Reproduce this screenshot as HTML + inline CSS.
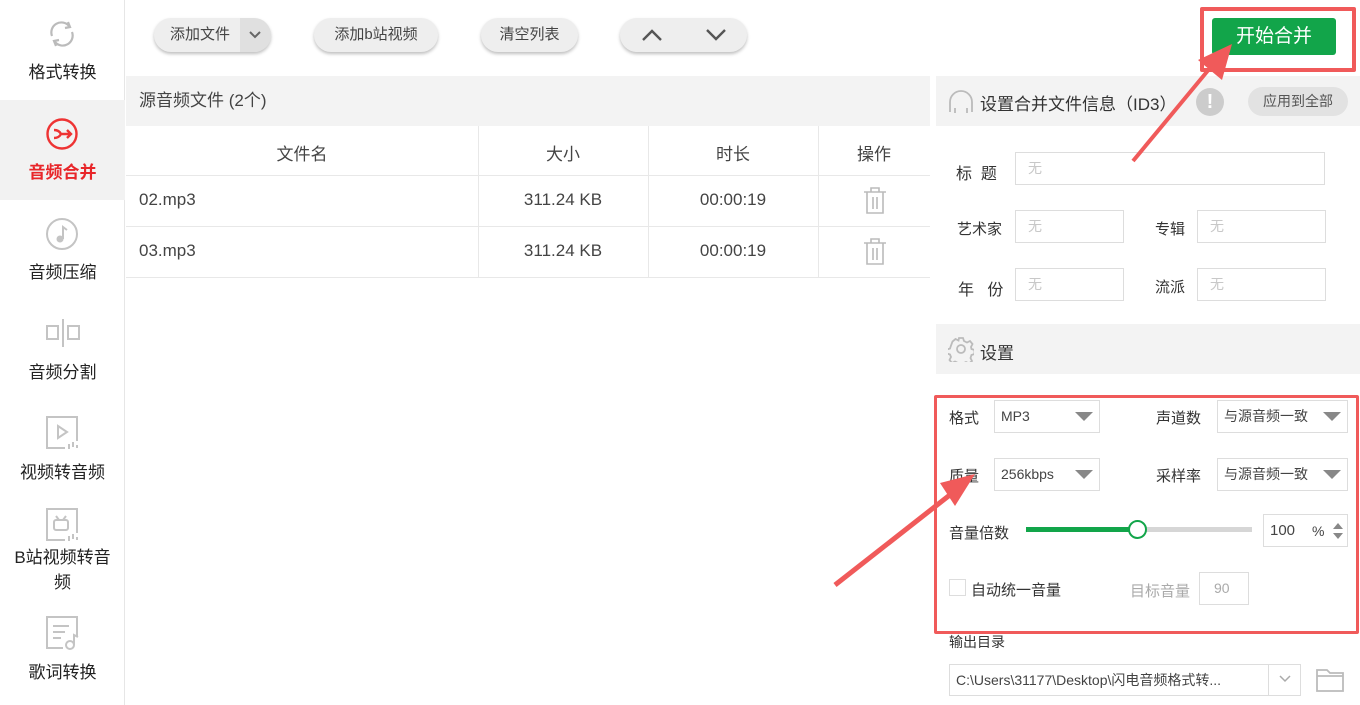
<!DOCTYPE html>
<html><head><meta charset="utf-8"><style>
*{margin:0;padding:0;box-sizing:border-box}
body{width:1360px;height:705px;overflow:hidden;background:#fff;font-family:"Liberation Sans","Noto Sans CJK SC",sans-serif;color:#333;position:relative}
.a{position:absolute}
.side{left:0;top:0;width:125px;height:705px;border-right:1px solid #e6e6e6;background:#fff}
.si{position:absolute;left:0;width:125px;text-align:center;font-size:17px;color:#222}
.btn{position:absolute;top:18px;height:34px;border-radius:17px;background:#eeeeee;box-shadow:0 2px 3px rgba(0,0,0,.25);font-size:15px;color:#444;line-height:34px;text-align:center}
.cell{position:absolute;text-align:center;font-size:17px;color:#444}
.inp{position:absolute;height:33px;border:1px solid #ddd;background:#fff;font-size:14px;color:#c8c8c8;line-height:31px;padding-left:12px}
.lbl{position:absolute;font-size:15px;color:#333}
.sel{position:absolute;height:33px;border:1px solid #ddd;background:#fff;font-size:14px;color:#444;line-height:31px;padding-left:6px}
.tri{position:absolute;right:6px;top:11px;width:0;height:0;border-left:9px solid transparent;border-right:9px solid transparent;border-top:9px solid #888}
</style></head><body>
<div class="a side">
 <div class="si" style="top:0;height:100px">
  <svg class="a" style="left:46px;top:18px" width="32" height="32" viewBox="0 0 32 32" fill="none" stroke="#bbb" stroke-width="2.2"><path d="M6 18a10 10 0 0 1 17-10"/><path d="M26 14a10 10 0 0 1-17 10"/><path d="M22 4l2 5-5 1" /><path d="M10 28l-2-5 5-1"/></svg>
  <div class="a" style="top:58px;width:125px">格式转换</div></div>
 <div class="si" style="top:100px;height:100px;background:#f2f2f2">
  <svg class="a" style="left:45px;top:17px" width="34" height="34" viewBox="0 0 34 34" fill="none" stroke="#e33" stroke-width="2.4"><circle cx="17" cy="17" r="14.5"/><path d="M9 13q5 0 7 4q-2 4-7 4M16 17h10M22 13l4 4-4 4"/></svg>
  <div class="a" style="top:58px;width:125px;color:#e8262a;font-weight:bold">音频合并</div></div>
 <div class="si" style="top:200px;height:100px">
  <svg class="a" style="left:45px;top:17px" width="34" height="34" viewBox="0 0 34 34"><circle cx="17" cy="17" r="15" fill="none" stroke="#c4c4c4" stroke-width="2"/><circle cx="15" cy="22" r="3.5" fill="#c4c4c4"/><path d="M18 22V10l4 3" stroke="#c4c4c4" stroke-width="2" fill="none"/></svg>
  <div class="a" style="top:58px;width:125px">音频压缩</div></div>
 <div class="si" style="top:300px;height:100px">
  <svg class="a" style="left:46px;top:18px" width="34" height="30" viewBox="0 0 34 30" fill="none" stroke="#c4c4c4" stroke-width="2"><rect x="1" y="8" width="11" height="13"/><rect x="22" y="8" width="11" height="13"/><path d="M17 1v28"/></svg>
  <div class="a" style="top:58px;width:125px">音频分割</div></div>
 <div class="si" style="top:400px;height:100px">
  <svg class="a" style="left:45px;top:15px" width="34" height="36" viewBox="0 0 34 36" fill="none" stroke="#c4c4c4" stroke-width="2"><path d="M20 33H2V2h30v24"/><path d="M13 11l9 6-9 6z"/><path d="M24 29v5M28 27v5M32 30v3"/></svg>
  <div class="a" style="top:58px;width:125px">视频转音频</div></div>
 <div class="si" style="top:500px;height:110px">
  <svg class="a" style="left:45px;top:7px" width="34" height="36" viewBox="0 0 34 36" fill="none" stroke="#c4c4c4" stroke-width="2"><path d="M20 33H2V2h30v24"/><rect x="9" y="13" width="14" height="10" rx="2"/><path d="M11 9l3 4M21 9l-3 4"/><path d="M24 29v5M28 27v5M32 30v3"/></svg>
  <div class="a" style="top:45px;width:125px;line-height:25px">B站视频转音<br>频</div></div>
 <div class="si" style="top:610px;height:95px">
  <svg class="a" style="left:45px;top:5px" width="34" height="36" viewBox="0 0 34 36" fill="none" stroke="#c4c4c4" stroke-width="2"><path d="M18 33H2V2h30v20"/><path d="M8 11h16M8 17h12M8 23h8"/><circle cx="25" cy="30" r="4"/><path d="M29 30V20l4 2"/></svg>
  <div class="a" style="top:48px;width:125px">歌词转换</div></div>
</div>

<div class="btn" style="left:154px;width:117px;text-align:left;padding-left:16px">添加文件<span class="a" style="left:86px;top:0;width:31px;height:34px;background:#e0e0e0;border-radius:0 17px 17px 0"><svg class="a" style="left:8px;top:12px" width="14" height="10" viewBox="0 0 14 10" fill="none" stroke="#666" stroke-width="2"><path d="M2 2l5 5 5-5"/></svg></span></div>
<div class="btn" style="left:314px;width:124px">添加b站视频</div>
<div class="btn" style="left:481px;width:97px">清空列表</div>
<div class="btn" style="left:620px;width:127px"><svg class="a" style="left:20px;top:10px" width="24" height="14" viewBox="0 0 24 14" fill="none" stroke="#555" stroke-width="2.4"><path d="M3 12l9-9 9 9"/></svg><svg class="a" style="left:84px;top:9px" width="24" height="14" viewBox="0 0 24 14" fill="none" stroke="#555" stroke-width="2.4"><path d="M3 3l9 9 9-9"/></svg></div>

<div class="a" style="left:126px;top:76px;width:804px;height:50px;background:#f3f3f3;font-size:17px;line-height:50px;padding-left:13px;color:#444">源音频文件 (2个)</div>
<div class="a" style="left:126px;top:126px;width:804px;height:152px">
 <div class="a" style="left:352px;top:0;width:1px;height:151px;background:#e8e8e8"></div>
 <div class="a" style="left:522px;top:0;width:1px;height:151px;background:#e8e8e8"></div>
 <div class="a" style="left:692px;top:0;width:1px;height:151px;background:#e8e8e8"></div>
 <div class="a" style="left:0;top:49px;width:804px;height:1px;background:#e8e8e8"></div>
 <div class="a" style="left:0;top:100px;width:804px;height:1px;background:#e8e8e8"></div>
 <div class="a" style="left:0;top:151px;width:804px;height:1px;background:#e8e8e8"></div>
 <div class="cell" style="left:0;top:14px;width:352px">文件名</div>
 <div class="cell" style="left:352px;top:14px;width:170px">大小</div>
 <div class="cell" style="left:522px;top:14px;width:170px">时长</div>
 <div class="cell" style="left:692px;top:14px;width:112px">操作</div>
 <div class="cell" style="left:13px;top:64px;text-align:left">02.mp3</div>
 <div class="cell" style="left:352px;top:64px;width:170px">311.24 KB</div>
 <div class="cell" style="left:522px;top:64px;width:170px">00:00:19</div>
 <div class="cell" style="left:13px;top:115px;text-align:left">03.mp3</div>
 <div class="cell" style="left:352px;top:115px;width:170px">311.24 KB</div>
 <div class="cell" style="left:522px;top:115px;width:170px">00:00:19</div>
 <svg class="a" style="left:737px;top:61px" width="24" height="27" viewBox="0 0 24 27" fill="none" stroke="#bbb" stroke-width="1.6"><path d="M1 5h22M8 5V1h8v4M4 5v21h16V5M10 10v12M14 10v12"/></svg>
 <svg class="a" style="left:737px;top:112px" width="24" height="27" viewBox="0 0 24 27" fill="none" stroke="#bbb" stroke-width="1.6"><path d="M1 5h22M8 5V1h8v4M4 5v21h16V5M10 10v12M14 10v12"/></svg>
</div>

<div class="a" style="left:1212px;top:18px;width:124px;height:37px;background:#12a54a;border-radius:3px;color:#fff;font-size:19px;text-align:center;line-height:37px">开始合并</div>
<div class="a" style="left:1200px;top:7px;width:156px;height:65px;border:4px solid #f05a5a;border-radius:2px"></div>

<div class="a" style="left:936px;top:76px;width:424px;height:50px;background:#f3f3f3"></div>
<svg class="a" style="left:948px;top:88px" width="26" height="26" viewBox="0 0 26 26" fill="none" stroke="#bbb" stroke-width="1.8"><path d="M2 24V14a11 11 0 0 1 22 0v10M7 20v5M19 20v5"/></svg>
<div class="lbl" style="left:980px;top:90px;font-size:17px">设置合并文件信息（ID3）</div>
<div class="a" style="left:1196px;top:88px;width:28px;height:28px;border-radius:50%;background:#ccc;color:#fff;font-weight:bold;font-size:20px;text-align:center;line-height:28px">!</div>
<div class="a" style="left:1248px;top:87px;width:100px;height:29px;border-radius:15px;background:#e2e2e2;font-size:14px;text-align:center;line-height:29px;color:#555">应用到全部</div>

<div class="lbl" style="left:956px;top:160px;font-size:16px">标&nbsp;&nbsp;题</div>
<div class="inp" style="left:1015px;top:152px;width:310px">无</div>
<div class="lbl" style="left:957px;top:218px">艺术家</div>
<div class="inp" style="left:1015px;top:210px;width:109px">无</div>
<div class="lbl" style="left:1155px;top:218px">专辑</div>
<div class="inp" style="left:1197px;top:210px;width:129px">无</div>
<div class="lbl" style="left:958px;top:276px;font-size:16px">年&nbsp;&nbsp;&nbsp;份</div>
<div class="inp" style="left:1015px;top:268px;width:109px">无</div>
<div class="lbl" style="left:1155px;top:276px">流派</div>
<div class="inp" style="left:1197px;top:268px;width:129px">无</div>

<div class="a" style="left:936px;top:324px;width:424px;height:50px;background:#f3f3f3"></div>
<svg class="a" style="left:948px;top:336px" width="26" height="26" viewBox="0 0 26 26" fill="none" stroke="#bbb" stroke-width="1.8"><circle cx="13" cy="13" r="4"/><path d="M11 2h4l1 3 3 1.5 3-1.5 2.5 3-1.5 3 .5 2 3 1v4l-3 1-1 3 1.5 3-3 2.5-3-1.5-2 1-1 3h-4l-1-3-3-1.5-3 1.5-2.5-3 1.5-3-1-2.5-3-1v-4l3-1 1-3L4.5 5.5l3-2.5 3 1.5z"/></svg>
<div class="lbl" style="left:980px;top:339px;font-size:17px">设置</div>

<div class="lbl" style="left:949px;top:407px">格式</div>
<div class="sel" style="left:994px;top:400px;width:106px">MP3<span class="tri"></span></div>
<div class="lbl" style="left:1156px;top:407px">声道数</div>
<div class="sel" style="left:1217px;top:400px;width:131px">与源音频一致<span class="tri"></span></div>
<div class="lbl" style="left:949px;top:465px">质量</div>
<div class="sel" style="left:994px;top:458px;width:106px">256kbps<span class="tri"></span></div>
<div class="lbl" style="left:1156px;top:465px">采样率</div>
<div class="sel" style="left:1217px;top:458px;width:131px">与源音频一致<span class="tri"></span></div>
<div class="lbl" style="left:949px;top:522px">音量倍数</div>
<div class="a" style="left:1026px;top:527px;width:112px;height:5px;background:#12a54a"></div>
<div class="a" style="left:1138px;top:527px;width:114px;height:5px;background:#d6d6d6"></div>
<div class="a" style="left:1128px;top:520px;width:19px;height:19px;border-radius:50%;border:2px solid #12a54a;background:#fff"></div>
<div class="sel" style="left:1263px;top:514px;width:85px;padding-left:6px;font-size:15px">100<span class="a" style="left:48px;top:1px;font-size:14px">%</span><svg class="a" style="left:68px;top:6px" width="12" height="20" viewBox="0 0 12 20" fill="#888"><path d="M1 8l5-6 5 6zM1 12l5 6 5-6z"/></svg></div>
<div class="a" style="left:949px;top:579px;width:17px;height:17px;border:1px solid #ddd"></div>
<div class="lbl" style="left:971px;top:579px">自动统一音量</div>
<div class="lbl" style="left:1130px;top:580px;color:#aaa">目标音量</div>
<div class="inp" style="left:1199px;top:572px;width:50px;padding-left:14px;color:#aaa">90</div>
<div class="a" style="left:934px;top:395px;width:425px;height:239px;border:3px solid #f05a5a;border-radius:2px"></div>

<div class="lbl" style="left:949px;top:632px;font-size:14px">输出目录</div>
<div class="a" style="left:949px;top:664px;width:352px;height:32px;border:1px solid #ddd;font-size:14px;line-height:30px;padding-left:6px;color:#444">C:\Users\31177\Desktop\闪电音频格式转...</div>
<div class="a" style="left:1268px;top:665px;width:1px;height:30px;background:#ddd"></div>
<svg class="a" style="left:1277px;top:674px" width="16" height="10" viewBox="0 0 16 10" fill="none" stroke="#aaa" stroke-width="1.5"><path d="M3 2l5 5 5-5"/></svg>
<svg class="a" style="left:1316px;top:666px" width="28" height="26" viewBox="0 0 28 26" fill="none" stroke="#bbb" stroke-width="1.8"><path d="M1 4h10l3 3h13v18H1zM1 10h26"/></svg>

<svg class="a" style="left:0;top:0" width="1360" height="705" viewBox="0 0 1360 705">
 <line x1="1133" y1="161" x2="1215" y2="62" stroke="#f05a5a" stroke-width="4"/>
 <path d="M1232 44L1222 80L1198 60z" fill="#f05a5a"/>
 <line x1="835" y1="585" x2="960" y2="487" stroke="#f05a5a" stroke-width="5"/>
 <path d="M975 474L955 506L940 483z" fill="#f05a5a"/>
</svg>
</body></html>
